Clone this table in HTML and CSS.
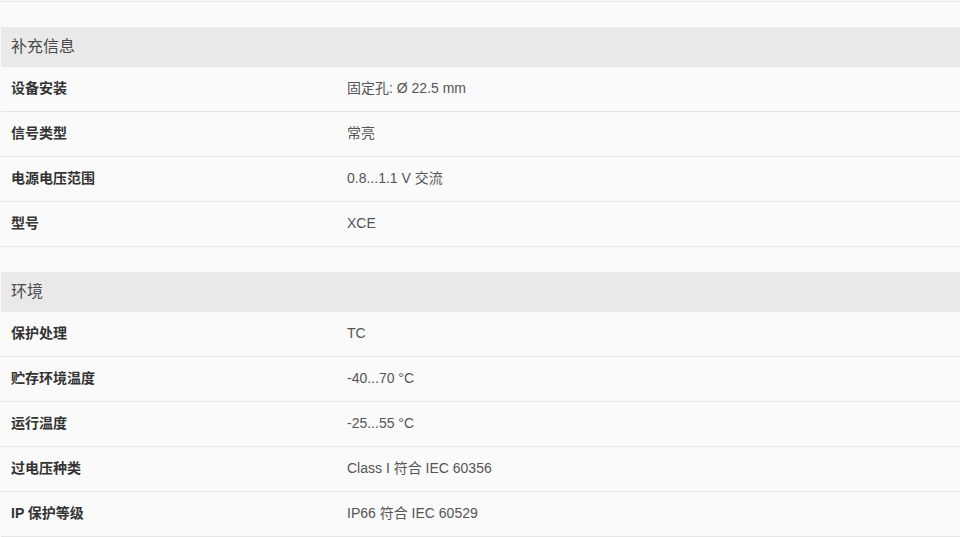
FILE: index.html
```html
<!DOCTYPE html>
<html lang="zh-CN">
<head>
<meta charset="utf-8">
<title>规格</title>
<link rel="stylesheet" href="styles.css">
</head>
<body>
<div class="page">
  <div class="top-rule"></div>
  <section class="spec">
    <div class="spec-head">补充信息</div>
    <div class="spec-row"><div class="k">设备安装</div><div class="v">固定孔: Ø 22.5 mm</div></div>
    <div class="spec-row"><div class="k">信号类型</div><div class="v">常亮</div></div>
    <div class="spec-row"><div class="k">电源电压范围</div><div class="v">0.8...1.1 V 交流</div></div>
    <div class="spec-row"><div class="k">型号</div><div class="v">XCE</div></div>
  </section>
  <section class="spec">
    <div class="spec-head">环境</div>
    <div class="spec-row"><div class="k">保护处理</div><div class="v">TC</div></div>
    <div class="spec-row"><div class="k">贮存环境温度</div><div class="v">-40...70 °C</div></div>
    <div class="spec-row"><div class="k">运行温度</div><div class="v">-25...55 °C</div></div>
    <div class="spec-row"><div class="k">过电压种类</div><div class="v">Class I 符合 IEC 60356</div></div>
    <div class="spec-row"><div class="k">IP 保护等级</div><div class="v">IP66 符合 IEC 60529</div></div>
  </section>
</div>
</body>
</html>
```
FILE: styles.css
```css
html, body {
  margin: 0;
  padding: 0;
  background: #fafafa;
}
body {
  font-family: "Liberation Sans", Arial, "Noto Sans CJK SC", sans-serif;
  color: #444;
}
.page {
  padding-left: 1px;
  display: flex;
  flex-direction: column;
}
.top-rule {
  height: 1px;
  border-bottom: 1px solid #e6e6e6;
  margin-bottom: 25px;
}
.spec {
  display: flex;
  flex-direction: column;
  margin-bottom: 25px;
}
.spec-head {
  height: 40px;
  box-sizing: border-box;
  display: flex;
  align-items: center;
  padding: 0 10px 1px;
  background: #e9e9e9;
  font-size: 16px;
  line-height: 20px;
  color: #4a4a4a;
}
.spec-row {
  display: grid;
  grid-template-columns: 336px 1fr;
  height: 44px;
  box-sizing: content-box;
  border-bottom: 1px solid #e6e6e6;
  align-items: center;
  font-size: 14px;
  line-height: 18px;
}
.k, .v {
  padding: 0 10px 3px;
}
.k {
  font-weight: bold;
  color: #333;
}
.v {
  color: #555;
}
```
